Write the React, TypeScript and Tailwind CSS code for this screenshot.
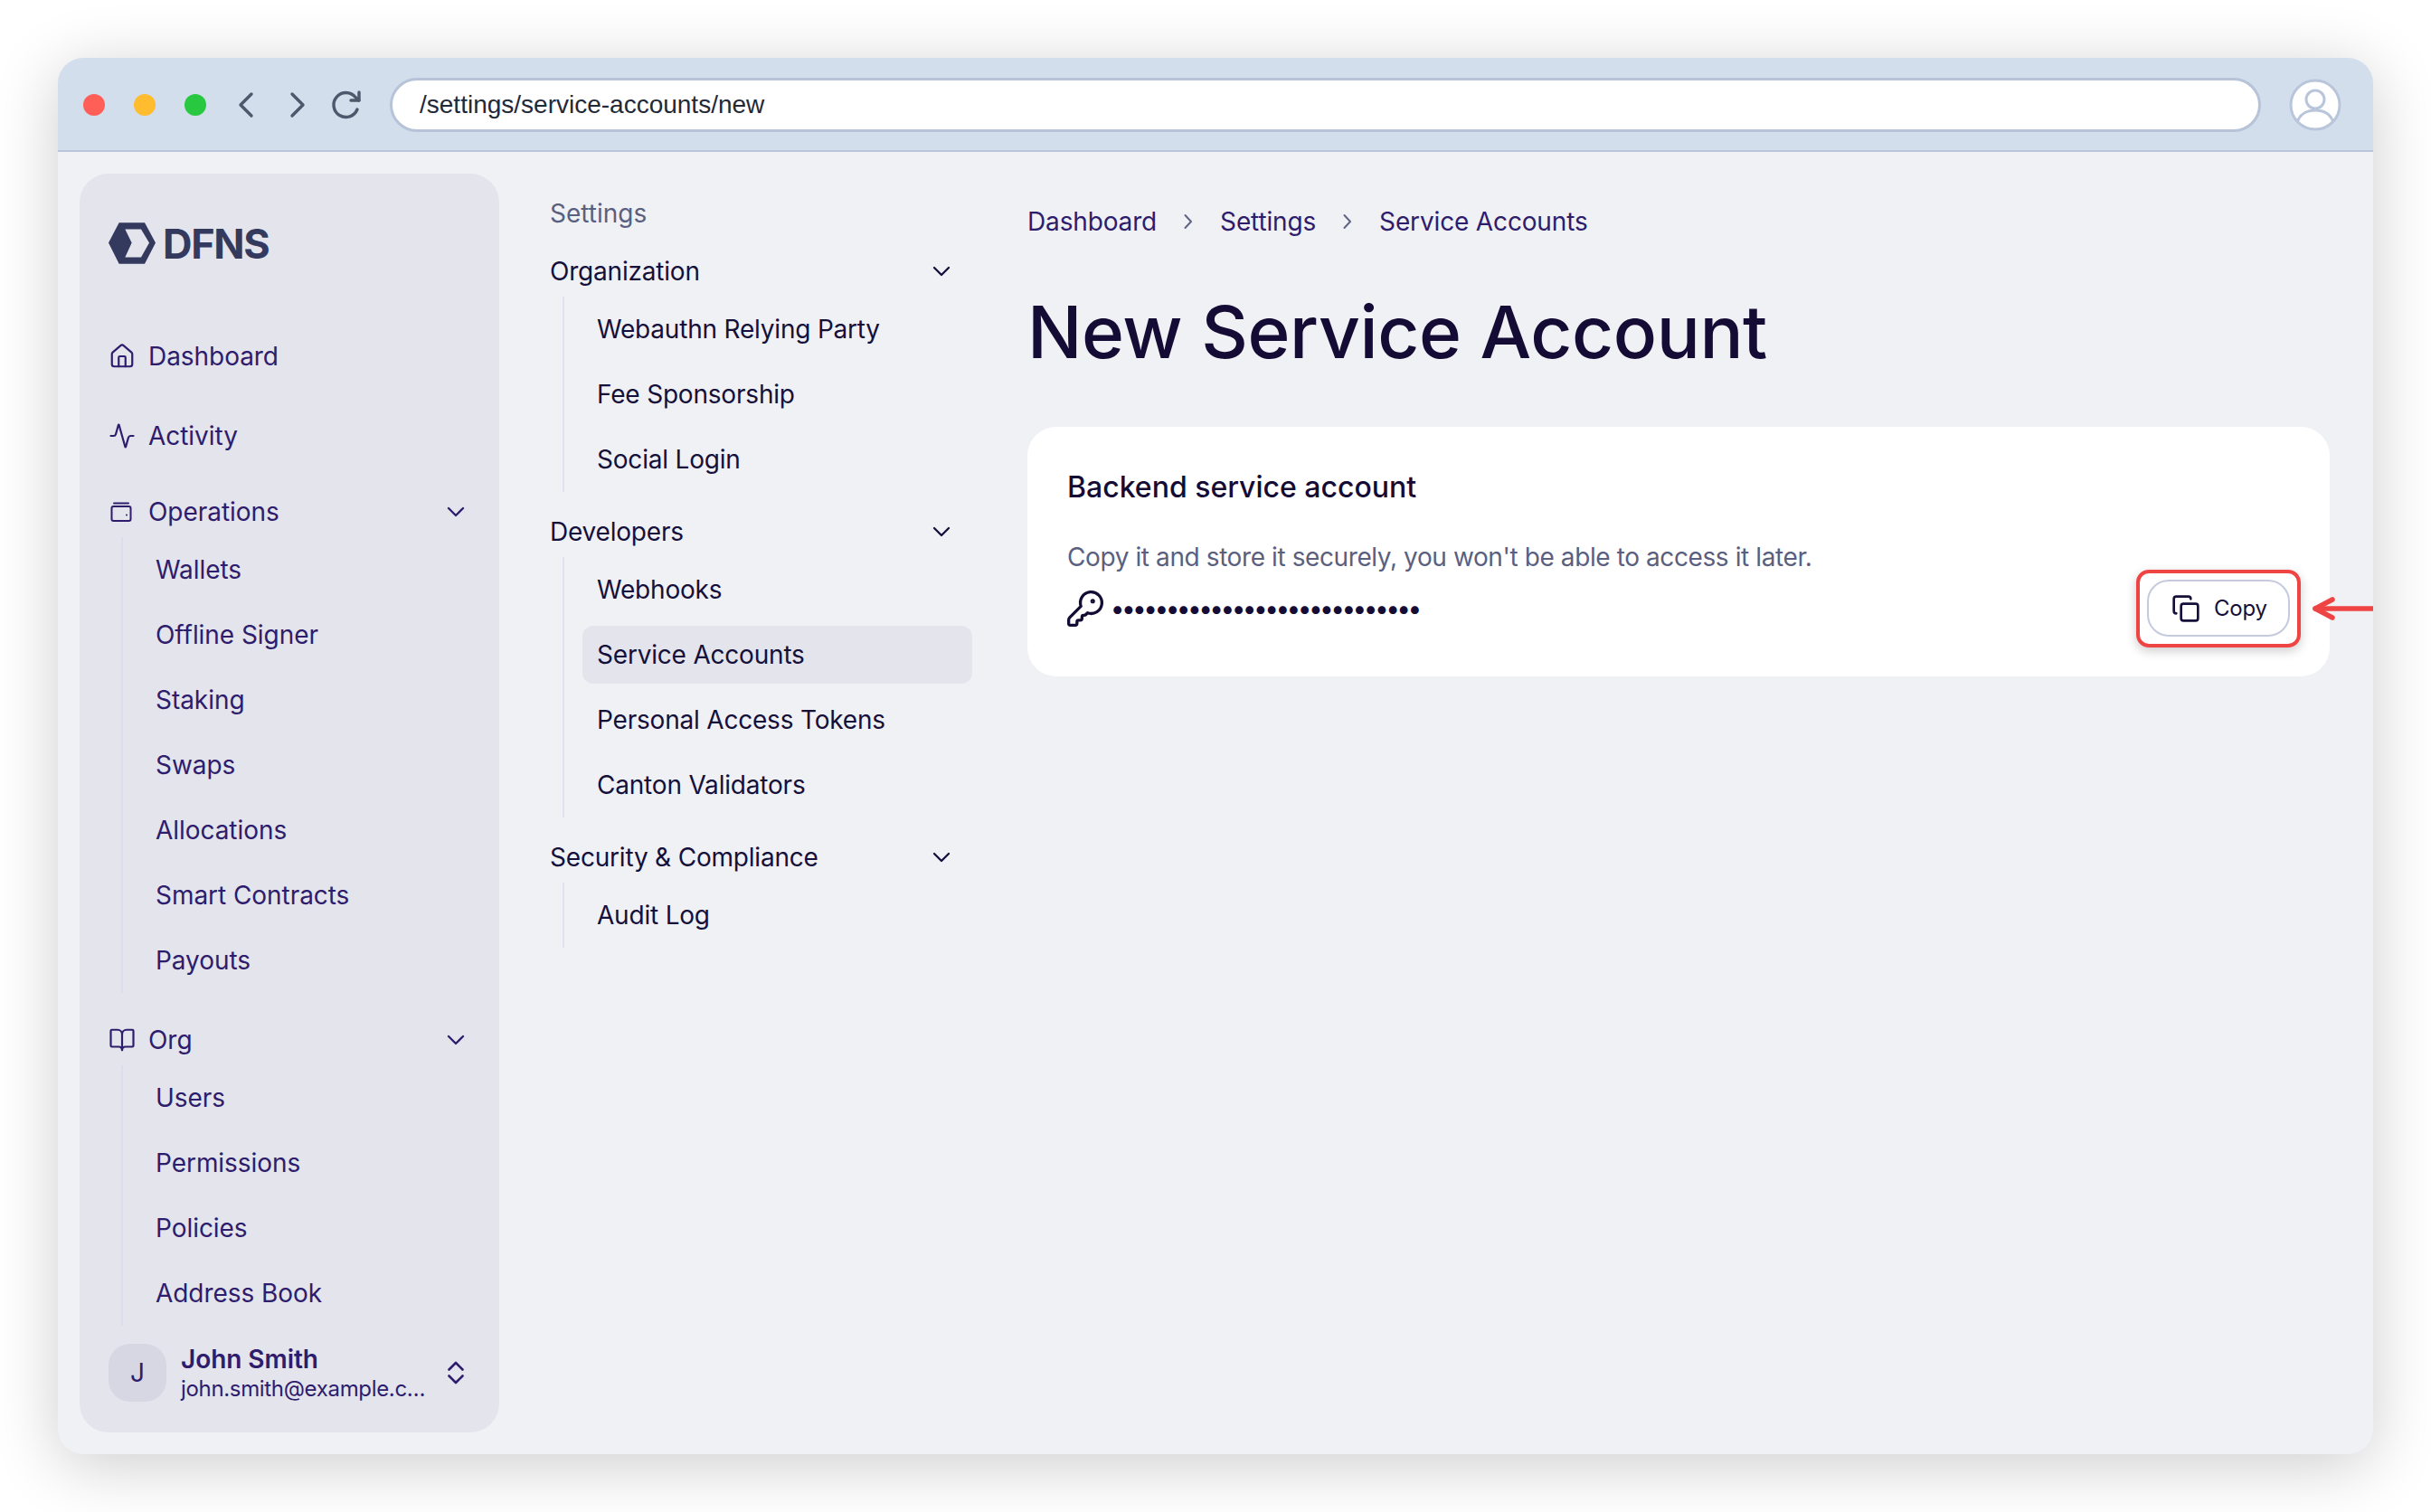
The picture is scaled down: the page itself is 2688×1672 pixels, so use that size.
import React from "react";
import { Activity, BookOpen, ChevronDown, Copy, House, KeyRound } from "lucide-react";

const SIDE = "text-[#2e1c6c]";
const INK = "text-[#15103a]";

function Logo() {
  return (
    <div className="flex items-center gap-[8px] h-[46px] shrink-0">
      <svg width="52" height="46" viewBox="30 33 156 137" className="shrink-0">
        <path
          fillRule="evenodd"
          fill="#333a5e"
          d="M30 100 65 33H150L186 100 150 170H65ZM85 55 107 100 85 148H138L165 100 138 55Z"
        />
      </svg>
      <span className="font-bold text-[45px] leading-none tracking-[-1.3px] text-[#333a5e]">DFNS</span>
    </div>
  );
}

function WalletIcon() {
  return (
    <svg width="24" height="24" viewBox="0 0 24 24" fill="none" stroke="currentColor" strokeWidth="2" strokeLinecap="round" strokeLinejoin="round" className="ml-[2px]">
      <path d="M4 2.5h16" />
      <rect x="1.5" y="6" width="21" height="16" rx="2" />
      <path d="M18 15.5h.01" />
    </svg>
  );
}

function TopRow({ icon, label, chevron, className = "" }: { icon: React.ReactNode; label: string; chevron?: boolean; className?: string }) {
  return (
    <div className={`flex items-center h-[56px] shrink-0 ${className}`}>
      <span className="w-[44px] shrink-0 flex items-center">{icon}</span>
      <span className="text-[28px] tracking-[-0.05px] flex-1">{label}</span>
      {chevron && <ChevronDown size={32} strokeWidth={1.75} />}
    </div>
  );
}

function SubList({ items }: { items: string[] }) {
  return (
    <div className="ml-[14px] border-l-2 border-[#dcdfeb] shrink-0">
      {items.map((t) => (
        <div key={t} className="h-[72px] flex items-center pl-[36px] text-[28px] tracking-[-0.05px]">
          {t}
        </div>
      ))}
    </div>
  );
}

function Sidebar() {
  return (
    <aside className={`w-[464px] shrink-0 h-full rounded-[32px] bg-[#e3e4ec] flex flex-col pt-[54px] pl-[32px] pr-[32px] pb-[32px] ${SIDE}`}>
      <Logo />
      <TopRow className="mt-[74px]" icon={<House size={30} strokeWidth={1.75} />} label="Dashboard" />
      <TopRow className="mt-[32px]" icon={<Activity size={30} strokeWidth={1.75} />} label="Activity" />
      <TopRow className="mt-[28px]" icon={<WalletIcon />} label="Operations" chevron />
      <SubList items={["Wallets", "Offline Signer", "Staking", "Swaps", "Allocations", "Smart Contracts", "Payouts"]} />
      <TopRow className="mt-[24px]" icon={<BookOpen size={30} strokeWidth={1.75} />} label="Org" chevron />
      <SubList items={["Users", "Permissions", "Policies", "Address Book"]} />
      <div className="mt-auto flex items-center shrink-0">
        <div className="w-[64px] h-[64px] rounded-[24px] bg-[#d6d7e2] flex items-center justify-center text-[28px] shrink-0">J</div>
        <div className="ml-[16px] pt-[3px] flex-1 min-w-0">
          <div className="text-[28px] leading-[34px] font-semibold tracking-[-0.05px]">John Smith</div>
          <div className="text-[24px] leading-[32px] tracking-[-0.33px] whitespace-nowrap">john.smith@example.c…</div>
        </div>
        <svg width="20" height="26" viewBox="0 0 20 26" fill="none" stroke="currentColor" strokeWidth="2.6" strokeLinecap="round" strokeLinejoin="round" className="shrink-0 mr-[6px]">
          <path d="M2.5 9.5 10 2l7.5 7.5" />
          <path d="M2.5 16.5 10 24l7.5-7.5" />
        </svg>
      </div>
    </aside>
  );
}

function SecondaryGroup({ title, items, active, className = "" }: { title: string; items: string[]; active?: string; className?: string }) {
  return (
    <div className={className}>
      <div className="h-[56px] flex items-center justify-between text-[28px] tracking-[-0.2px] mr-[18px]">
        <span>{title}</span>
        <ChevronDown size={32} strokeWidth={1.75} />
      </div>
      <div className="ml-[14px] border-l-2 border-[#dfe3ee]">
        {items.map((t) =>
          t === active ? (
            <div key={t} className="h-[64px] my-[4px] ml-[20px] rounded-[12px] bg-[#e3e4ec] flex items-center pl-[16px] text-[28px] tracking-[-0.2px]">
              {t}
            </div>
          ) : (
            <div key={t} className="h-[72px] flex items-center ml-[20px] pl-[16px] text-[28px] tracking-[-0.2px]">
              {t}
            </div>
          )
        )}
      </div>
    </div>
  );
}

function SecondaryNav() {
  return (
    <nav className={`ml-[56px] w-[467px] shrink-0 pt-[16px] ${INK}`}>
      <div className="h-[56px] flex items-center text-[28px] text-[#5a5f80] mb-[8px]">Settings</div>
      <SecondaryGroup title="Organization" items={["Webauthn Relying Party", "Fee Sponsorship", "Social Login"]} />
      <SecondaryGroup className="mt-[16px]" title="Developers" items={["Webhooks", "Service Accounts", "Personal Access Tokens", "Canton Validators"]} active="Service Accounts" />
      <SecondaryGroup className="mt-[16px]" title="Security & Compliance" items={["Audit Log"]} />
    </nav>
  );
}

function Crumb({ label, last }: { label: string; last?: boolean }) {
  return (
    <>
      <span className="text-[28px] tracking-[-0.15px] text-[#2e1c6c]">{label}</span>
      {!last && (
        <svg width="12" height="18" viewBox="0 0 12 18" fill="none" stroke="#5f6585" strokeWidth="2" strokeLinecap="round" strokeLinejoin="round" className="mx-[29px]">
          <path d="M2.5 2l6.5 7-6.5 7" />
        </svg>
      )}
    </>
  );
}

function Main() {
  return (
    <main className="ml-[61px] w-[1440px] shrink-0 pt-[25px]">
      <div className="h-[56px] flex items-center">
        <Crumb label="Dashboard" />
        <Crumb label="Settings" />
        <Crumb label="Service Accounts" last />
      </div>
      <h1 className="mt-[46px] h-[96px] leading-[96px] text-[80px] font-medium tracking-[-0.4px] text-[#150c35]">New Service Account</h1>
      <section className="mt-[57px] h-[276px] rounded-[32px] bg-white px-[44px] pt-[45px]">
        <div className="text-[32px] leading-[44px] font-medium text-[#150c35]">Backend service account</div>
        <div className="mt-[34px] text-[28px] leading-[42px] tracking-[-0.4px] text-[#5a5f80]">Copy it and store it securely, you won't be able to access it later.</div>
        <div className="mt-[4px] flex items-center justify-between h-[63px]">
          <div className="flex items-center gap-[7px] text-[#150c35]">
            <KeyRound size={44} strokeWidth={1.8} className="ml-[-2px]" />
            <span className="text-[28px] font-bold tracking-[-1.1px] leading-none">••••••••••••••••••••••••••••</span>
          </div>
          <div className="relative">
            <button className="flex items-center w-[158px] h-[63px] rounded-[24px] border-2 border-[#c5cbdd] bg-white pl-[25px] text-[#15103a]">
              <Copy size={32} strokeWidth={2} />
              <span className="ml-[15px] text-[24px] tracking-[-0.2px]">Copy</span>
            </button>
            <div className="absolute left-[-12px] right-[-12px] top-[-11px] bottom-[-12px] rounded-[14px] border-[4px] border-[#ef4444] shadow-[0_4px_12px_rgba(0,0,0,0.2)] pointer-events-none" />
            <svg width="68" height="30" viewBox="0 0 68 30" fill="none" stroke="#ef4444" strokeWidth="5.5" strokeLinecap="round" strokeLinejoin="round" className="absolute left-[183px] top-[17px]">
              <path d="M3 15H68" />
              <path d="M22 5 3 15l19 10" />
            </svg>
          </div>
        </div>
      </section>
    </main>
  );
}

function Header() {
  return (
    <header className="h-[104px] shrink-0 bg-[#d3deec] border-b-2 border-[#b9c5da] flex items-center pt-[2px] pl-[28px] pr-[35px]">
      <div className="flex gap-[32px]">
        <span className="w-[24px] h-[24px] rounded-full bg-[#ff5f57]" />
        <span className="w-[24px] h-[24px] rounded-full bg-[#febc2e]" />
        <span className="w-[24px] h-[24px] rounded-full bg-[#28c840]" />
      </div>
      <div className="ml-[33px] flex items-center text-[#4e586c]">
        <svg width="24" height="32" viewBox="0 0 24 32" fill="none" stroke="currentColor" strokeWidth="3.4" strokeLinecap="round" strokeLinejoin="round">
          <path d="M17 4 5 16l12 12" />
        </svg>
        <svg width="24" height="32" viewBox="0 0 24 32" fill="none" stroke="currentColor" strokeWidth="3.4" strokeLinecap="round" strokeLinejoin="round" className="ml-[31px]">
          <path d="M7 4l12 12L7 28" />
        </svg>
        <svg width="34" height="34" viewBox="0 0 34 34" fill="none" stroke="currentColor" strokeWidth="3.4" strokeLinecap="round" strokeLinejoin="round" className="ml-[26px]">
          <path d="M29 22a13.5 13.5 0 1 1-2-13.5L31 12" />
          <path d="M31 3v9h-9" />
        </svg>
      </div>
      <div className="ml-[31px] flex-1 h-[60px] rounded-full bg-white border-[3px] border-[#b6c3d8] flex items-center pl-[30px] font-['Liberation_Sans',sans-serif] text-[28px] text-[#1f2937]">
        /settings/service-accounts/new
      </div>
      <div className="ml-[31px]">
        <svg width="58" height="58" viewBox="0 0 58 58" fill="#ffffff" stroke="#b9c5da" strokeWidth="3">
          <circle cx="29" cy="29" r="27" />
          <circle cx="29" cy="23" r="10" />
          <path d="M9.5 47C13 38 20 35 29 35s16 3 19.5 12" fill="none" />
        </svg>
      </div>
    </header>
  );
}

export default function App() {
  return (
    <div className="w-[2688px] h-[1672px] bg-white p-[64px] font-[Inter,sans-serif] overflow-hidden">
      <div className="relative w-[2560px] h-[1544px] rounded-[28px] overflow-hidden flex flex-col bg-[#f0f1f5] shadow-[0_12px_72px_rgba(0,0,0,0.2)]">
        <Header />
        <div className="flex-1 min-h-0 flex p-[24px]">
          <Sidebar />
          <SecondaryNav />
          <Main />
        </div>
      </div>
    </div>
  );
}
